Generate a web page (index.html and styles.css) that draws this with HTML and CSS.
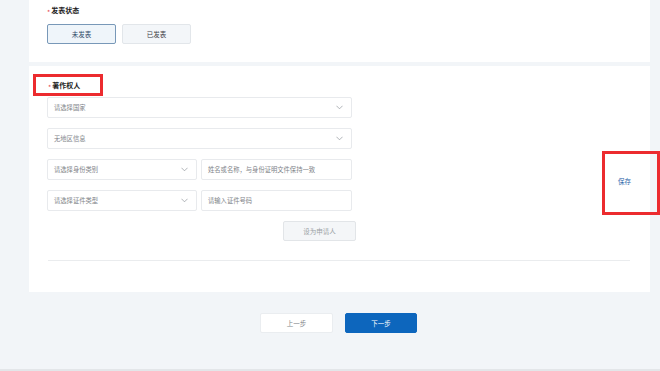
FILE: index.html
```html
<!DOCTYPE html>
<html lang="zh">
<head>
<meta charset="utf-8">
<title>著作权人</title>
<link rel="stylesheet" href="styles.css">
</head>
<body>
<div class="page">
  <div class="main">
    <section class="card card-status">
      <div class="label"><span class="req">*</span>发表状态</div>
      <div class="seg">
        <button class="seg-btn active">未发表</button>
        <button class="seg-btn">已发表</button>
      </div>
    </section>
    <section class="card card-owner">
      <div class="label owner-label"><span class="req">*</span>著作权人<span class="mark mark-title"></span></div>
      <div class="form">
        <div class="field select full"><span class="ph">请选择国家</span><svg class="chev" viewBox="0 0 8 5"><path d="M0.5 0.5 L4 4 L7.5 0.5"/></svg></div>
        <div class="field select full"><span class="ph">无地区信息</span><svg class="chev" viewBox="0 0 8 5"><path d="M0.5 0.5 L4 4 L7.5 0.5"/></svg></div>
        <div class="row">
          <div class="field select half"><span class="ph">请选择身份类别</span><svg class="chev" viewBox="0 0 8 5"><path d="M0.5 0.5 L4 4 L7.5 0.5"/></svg></div>
          <div class="field input half2"><span class="ph">姓名或名称，与身份证明文件保持一致</span></div>
        </div>
        <div class="row">
          <div class="field select half"><span class="ph">请选择证件类型</span><svg class="chev" viewBox="0 0 8 5"><path d="M0.5 0.5 L4 4 L7.5 0.5"/></svg></div>
          <div class="field input half2"><span class="ph">请输入证件号码</span></div>
        </div>
        <div class="actions"><button class="btn-apply" disabled>设为申请人</button></div>
      </div>
      <div class="divider"></div>
    </section>
    <div class="footer">
      <button class="btn btn-prev">上一步</button>
      <button class="btn btn-next">下一步</button>
    </div>
  </div>
  <div class="save"><span class="save-text">保存</span></div>
  <div class="bottom-line"></div>
</div>
</body>
</html>
```

FILE: styles.css
```css
* { box-sizing: border-box; }
html, body {
  margin: 0;
  padding: 0;
}
body {
  background: #f2f5f8;
  font-family: "Noto Sans CJK SC", "Noto Sans", sans-serif;
  width: 660px;
  height: 371px;
  overflow: hidden;
}
.page {
  position: relative;
  width: 660px;
  height: 371px;
}
.main {
  margin-left: 29px;
  width: 621px;
}
.card {
  background: #fff;
}
.card-status {
  height: 62px;
  padding: 2px 18px 0;
}
.label {
  font-size: 7px;
  font-weight: bold;
  color: #1e1e1e;
  line-height: 16px;
  height: 16px;
}
.req {
  color: #e5484d;
  margin-right: 1px;
  font-weight: normal;
  position: relative;
  top: 1.5px;
}
.seg {
  display: flex;
  gap: 6px;
  margin-top: 6px;
}
.seg-btn {
  width: 69px;
  height: 20px;
  border: 1px solid #e2e6ea;
  background: #f3f6f9;
  border-radius: 2px;
  font-family: inherit;
  font-size: 6.5px;
  color: #3d4046;
  padding: 0;
}
.seg-btn.active {
  border-color: #7898b8;
  background: #eff5fa;
  color: #2e4a68;
}
.card-owner {
  margin-top: 4px;
  height: 226px;
  padding: 11px 20px 0 18px;
}
.owner-label {
  position: relative;
  padding-left: 1px;
}
.mark {
  position: absolute;
  border: 3px solid #ec2b2f;
}
.mark-title {
  left: -14px;
  top: -3px;
  width: 70px;
  height: 22px;
}
.form {
  width: 309px;
  margin-top: 4px;
  display: flex;
  flex-direction: column;
  gap: 10px;
}
.field {
  height: 21px;
  border: 1px solid #e8eaed;
  border-radius: 2px;
  display: flex;
  align-items: center;
  justify-content: space-between;
  padding: 0 8px 0 6px;
  background: #fff;
}
.full { width: 305px; }
.row {
  display: flex;
  gap: 4px;
}
.half { width: 150px; }
.half2 { width: 151px; }
.ph {
  font-size: 6.3px;
  color: #808489;
  white-space: nowrap;
}
.chev {
  width: 7px;
  height: 5px;
  fill: none;
  stroke: #8f959b;
  stroke-width: 0.8;
}
.actions {
  display: flex;
  justify-content: flex-end;
}
.btn-apply {
  width: 73px;
  height: 20px;
  border: 1px solid #e2e5e8;
  border-radius: 2px;
  background: #f4f6f8;
  color: #9a9fa4;
  font-family: inherit;
  font-size: 6.5px;
  padding: 0;
}
.divider {
  margin-top: 19px;
  height: 1px;
  background: #eaecee;
  margin-left: 1px;
}
.footer {
  display: flex;
  justify-content: center;
  gap: 12px;
  margin-top: 21px;
  padding-right: 2px;
}
.btn {
  width: 73px;
  height: 20px;
  border-radius: 2px;
  font-family: inherit;
  font-size: 6.5px;
  padding: 0;
}
.btn-prev {
  background: #fff;
  border: 1px solid #eaedf0;
  color: #7f848a;
}
.btn-next {
  width: 72px;
  background: #0d66bd;
  border: 1px solid #0d66bd;
  color: #fff;
}
.save {
  position: absolute;
  left: 602px;
  top: 151px;
  width: 58px;
  height: 64px;
  border: 3px solid #ec2b2f;
}
.save-text {
  position: absolute;
  left: 13px;
  top: 22px;
  font-size: 6.5px;
  color: #2a64a8;
}
.bottom-line {
  position: absolute;
  left: 0;
  bottom: 0;
  width: 660px;
  height: 2px;
  background: #e3e6e9;
}
```
